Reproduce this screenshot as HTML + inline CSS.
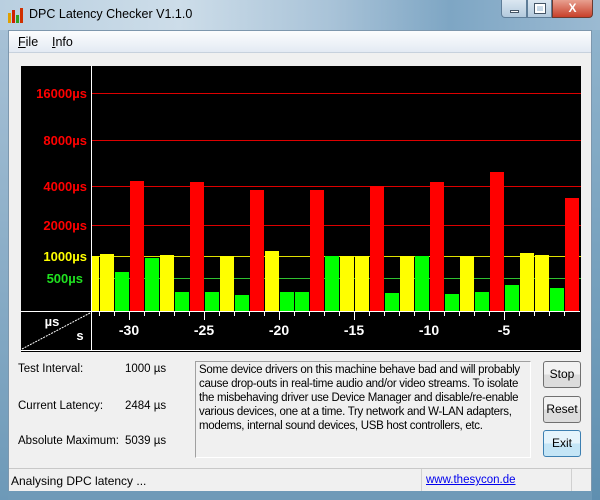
<!DOCTYPE html>
<html><head><style>
*{margin:0;padding:0;box-sizing:border-box}
body{width:600px;height:500px;overflow:hidden;font-family:"Liberation Sans",sans-serif;font-size:12px;background:#6f9ab8;position:relative}
.title{position:absolute;left:0;top:0;width:600px;height:30px;background:linear-gradient(90deg,#b9cfe0 0%,#cddde9 30%,#a9c3d8 55%,#7ea6c4 75%,#9bbad2 100%)}
.title span{position:absolute;left:29px;top:7px;font-size:12.5px;color:#000}
.frameL{position:absolute;left:0;top:30px;width:8px;height:470px;background:linear-gradient(180deg,#a7c1d6,#6d99b8)}
.frameR{position:absolute;right:0;top:30px;width:8px;height:470px;background:linear-gradient(180deg,#8fb3cc,#5f8fb0)}
.client{position:absolute;left:8px;top:30px;width:584px;height:461px;background:#f0f0f0;border:1px solid #7d97ad}
.menu{position:absolute;left:0;top:0;width:582px;height:22px;background:linear-gradient(#fcfdfe,#e3eaf3);border-bottom:1px solid #c7d1dd}
.menu span{position:absolute;top:4px;font-size:12.5px}
.lbl{position:absolute;font-size:11.5px;color:#000}
.btn{position:absolute;left:534px;width:38px;height:27px;border:1px solid #707070;border-radius:3px;background:linear-gradient(#f2f2f2 50%,#dcdcdc 50%);text-align:center;line-height:25px;font-size:12px}
.status{position:absolute;left:0;top:437px;width:582px;height:23px;border-top:1px solid #c8c8c8;background:#f0f0f0}
.txt div{white-space:nowrap}
</style></head><body>
<div class="title">
<svg style="position:absolute;left:8px;top:8px" width="16" height="15"><rect x="0" y="5" width="3" height="10" fill="#e0a000"/><rect x="4" y="2" width="3" height="13" fill="#d02000"/><rect x="8" y="7" width="3" height="8" fill="#30a020"/><rect x="12" y="0" width="3" height="15" fill="#d03000"/></svg>
<span>DPC Latency Checker V1.1.0</span>
<div style="position:absolute;left:501px;top:0;width:26px;height:18px;border:1px solid #5e7d98;border-top:none;border-radius:0 0 0 4px;background:linear-gradient(#dbe7f1,#b3cadd)"><div style="position:absolute;left:8px;top:10px;width:9px;height:3px;background:#fff;border:1px solid #456"></div></div>
<div style="position:absolute;left:527px;top:0;width:25px;height:18px;border:1px solid #5e7d98;border-top:none;background:linear-gradient(#dbe7f1,#b3cadd)"><div style="position:absolute;left:7px;top:4px;width:10px;height:9px;border:2px solid #fff;outline:1px solid #456"></div></div>
<div style="position:absolute;left:552px;top:0;width:41px;height:18px;border:1px solid #6b3a30;border-top:none;border-radius:0 0 4px 0;background:linear-gradient(#e8a090,#c8402a);color:#fff;font-weight:bold;text-align:center;font-size:12px;line-height:16px">X</div>
</div>
<div class="frameL"></div><div class="frameR"></div>
<div class="client">
<div class="menu"><span style="left:9px"><u>F</u>ile</span><span style="left:43px"><u>I</u>nfo</span></div>
<svg style="position:absolute;left:12px;top:35px" width="560" height="286" font-family="Liberation Sans" font-weight="bold" font-size="13">
<rect width="560" height="286" fill="#000"/>
<g stroke-width="1">
<line x1="71" y1="27.5" x2="560" y2="27.5" stroke="#d00"/>
<line x1="71" y1="74.5" x2="560" y2="74.5" stroke="#d00"/>
<line x1="71" y1="120.5" x2="560" y2="120.5" stroke="#d00"/>
<line x1="71" y1="159.5" x2="560" y2="159.5" stroke="#d00"/>
<line x1="71" y1="190.5" x2="560" y2="190.5" stroke="#e0e000"/>
<line x1="71" y1="212.5" x2="560" y2="212.5" stroke="#30c030"/>
</g>
<g fill="#ff0000" text-anchor="end">
<text x="66" y="32">16000µs</text><text x="66" y="79">8000µs</text><text x="66" y="125">4000µs</text><text x="66" y="164">2000µs</text>
</g>
<text x="66" y="195" text-anchor="end" fill="#ffff00">1000µs</text>
<text x="62" y="217" text-anchor="end" fill="#20e020">500µs</text>
<g transform="translate(-21,-66)">
<rect x="91" y="256" width="8" height="55" fill="#ff0"/>
<rect x="100" y="254" width="14" height="57" fill="#ff0"/>
<rect x="115" y="272" width="14" height="39" fill="#0f0"/>
<rect x="130" y="181" width="14" height="130" fill="#f00"/>
<rect x="145" y="258" width="14" height="53" fill="#0f0"/>
<rect x="160" y="255" width="14" height="56" fill="#ff0"/>
<rect x="175" y="292" width="14" height="19" fill="#0f0"/>
<rect x="190" y="182" width="14" height="129" fill="#f00"/>
<rect x="205" y="292" width="14" height="19" fill="#0f0"/>
<rect x="220" y="256" width="14" height="55" fill="#ff0"/>
<rect x="235" y="295" width="14" height="16" fill="#0f0"/>
<rect x="250" y="190" width="14" height="121" fill="#f00"/>
<rect x="265" y="251" width="14" height="60" fill="#ff0"/>
<rect x="280" y="292" width="14" height="19" fill="#0f0"/>
<rect x="295" y="292" width="14" height="19" fill="#0f0"/>
<rect x="310" y="190" width="14" height="121" fill="#f00"/>
<rect x="325" y="256" width="14" height="55" fill="#0f0"/>
<rect x="340" y="256" width="14" height="55" fill="#ff0"/>
<rect x="355" y="256" width="14" height="55" fill="#ff0"/>
<rect x="370" y="186" width="14" height="125" fill="#f00"/>
<rect x="385" y="293" width="14" height="18" fill="#0f0"/>
<rect x="400" y="256" width="14" height="55" fill="#ff0"/>
<rect x="415" y="256" width="14" height="55" fill="#0f0"/>
<rect x="430" y="182" width="14" height="129" fill="#f00"/>
<rect x="445" y="294" width="14" height="17" fill="#0f0"/>
<rect x="460" y="256" width="14" height="55" fill="#ff0"/>
<rect x="475" y="292" width="14" height="19" fill="#0f0"/>
<rect x="490" y="172" width="14" height="139" fill="#f00"/>
<rect x="505" y="285" width="14" height="26" fill="#0f0"/>
<rect x="520" y="253" width="14" height="58" fill="#ff0"/>
<rect x="535" y="255" width="14" height="56" fill="#ff0"/>
<rect x="550" y="288" width="14" height="23" fill="#0f0"/>
<rect x="565" y="198" width="14" height="113" fill="#f00"/>
<g stroke="#fff" stroke-width="1">
<line x1="91.5" y1="66" x2="91.5" y2="351"/>
<line x1="20" y1="311.5" x2="580" y2="311.5"/>
<line x1="20" y1="350.5" x2="580" y2="350.5"/>
<line x1="22" y1="349" x2="90" y2="313" stroke-dasharray="2,1"/>
<path d="M99.5 311v5M114.5 311v5M129.5 311v9M144.5 311v5M159.5 311v5M174.5 311v5M189.5 311v5M204.5 311v9M219.5 311v5M234.5 311v5M249.5 311v5M264.5 311v5M279.5 311v9M294.5 311v5M309.5 311v5M324.5 311v5M339.5 311v5M354.5 311v9M369.5 311v5M384.5 311v5M399.5 311v5M414.5 311v5M429.5 311v9M444.5 311v5M459.5 311v5M474.5 311v5M489.5 311v5M504.5 311v9M519.5 311v5M534.5 311v5M549.5 311v5M564.5 311v5"/>
</g>
<g fill="#fff" text-anchor="middle" font-size="14">
<text x="129" y="335">-30</text><text x="204" y="335">-25</text><text x="279" y="335">-20</text><text x="354" y="335">-15</text><text x="429" y="335">-10</text><text x="504" y="335">-5</text>
</g>
<text x="52" y="326" fill="#fff" text-anchor="middle">µs</text>
<text x="80" y="340" fill="#fff" text-anchor="middle">s</text>
</g>
</svg>
<div class="lbl" style="left:9px;top:332px">Test Interval:</div><div class="lbl" style="left:116px;top:332px">1000 µs</div>
<div class="lbl" style="left:9px;top:369px">Current Latency:</div><div class="lbl" style="left:116px;top:369px">2484 µs</div>
<div class="lbl" style="left:9px;top:404px">Absolute Maximum:</div><div class="lbl" style="left:116px;top:404px">5039 µs</div>
<div class="txt" style="position:absolute;left:186px;top:330px;width:336px;height:97px;border:1px solid #a0a0a0;border-right-color:#fff;border-bottom-color:#fff;padding:1px 3px;font-size:11.5px;letter-spacing:-0.3px;line-height:14px;overflow:hidden">
<div>Some device drivers on this machine behave bad and will probably</div>
<div>cause drop-outs in real-time audio and/or video streams. To isolate</div>
<div>the misbehaving driver use Device Manager and disable/re-enable</div>
<div>various devices, one at a time. Try network and W-LAN adapters,</div>
<div>modems, internal sound devices, USB host controllers, etc.</div>
</div>
<div class="btn" style="top:330px">Stop</div>
<div class="btn" style="top:365px">Reset</div>
<div class="btn" style="top:399px;border-color:#3c7fb1;background:linear-gradient(#e5f4fc 50%,#c4e5f6 50%)">Exit</div>
<div class="status"><span style="position:absolute;left:2px;top:5px;font-size:12px">Analysing DPC latency ...</span>
<div style="position:absolute;left:412px;top:0;width:1px;height:22px;background:#d0d0d0"></div>
<span style="position:absolute;left:417px;top:5px;font-size:11.5px;color:#0000ee;text-decoration:underline">www.thesycon.de</span>
<div style="position:absolute;left:562px;top:0;width:1px;height:22px;background:#d0d0d0"></div></div>
</div>
</body></html>
